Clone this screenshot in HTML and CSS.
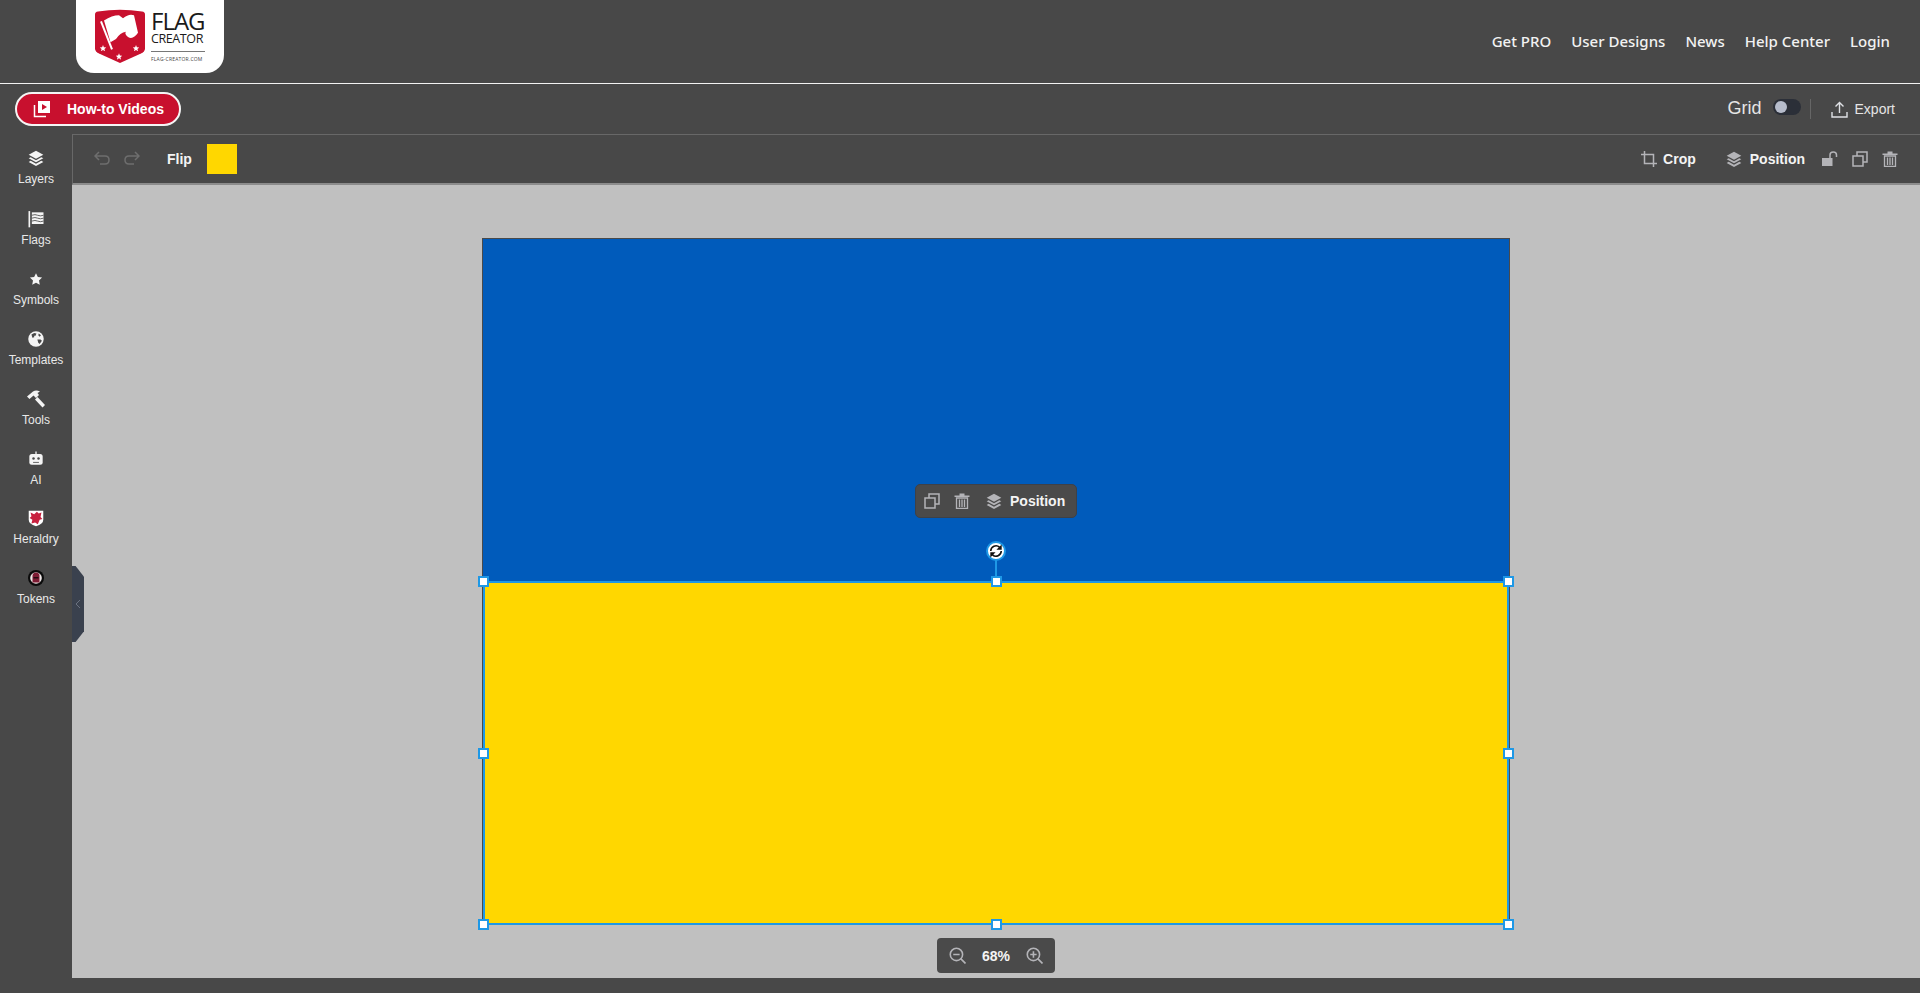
FILE: index.html
```html
<!DOCTYPE html>
<html lang="en">
<head>
    <meta charset="UTF-8">
    <title>Flag Creator</title>
    <link rel="stylesheet" href="styles.css">
</head>
<body>

    <svg class="defs" width="0" height="0">
        <symbol id="i-layers" viewBox="0 0 24 24">
            <path d="M12 1 L23 7 L12 13 L1 7 Z" fill="currentColor"/>
            <path d="M4 10.8 L12 15.2 L20 10.8 L23 12.5 L12 18.5 L1 12.5 Z" fill="currentColor"/>
            <path d="M4 16.3 L12 20.7 L20 16.3 L23 18 L12 24 L1 18 Z" fill="currentColor"/>
        </symbol>
        <symbol id="i-copy" viewBox="0 0 16 16">
            <path d="M1 5h10v10H1z M5 5V1h10v10h-4" fill="none" stroke="currentColor" stroke-width="1.5"/>
        </symbol>
        <symbol id="i-trash" viewBox="0 0 16 16">
            <path d="M0.5 2.5h15v1.6H0.5z M5.5 0.5h5v2h-5z" fill="currentColor"/>
            <path d="M2.5 5h11v10.5h-11z M5.5 6.5v7.5 M8 6.5v7.5 M10.5 6.5v7.5" fill="none" stroke="currentColor" stroke-width="1.3"/>
        </symbol>
        <symbol id="i-star" viewBox="-4 -4 8 8">
            <path d="M0 -3.4 L0.9 -1.1 3.3 -1 1.4 .5 2.1 2.8 0 1.500 -2.100 2.800 -1.400 .5 -3.300 -1 -.9 -1.100Z" fill="#fff"/>
        </symbol>
    </svg>

    <!-- Header -->
    <header class="site-header">
        <a class="logo">
            <svg class="logo-shield" viewBox="0 0 50 53" preserveAspectRatio="none">
                <path d="M0 5 Q0 3 3 2.500 Q25 -1 47 2.500 Q50 3 50 5 V38 Q50 41 46 43 L25 52 L4 43 Q0 41 0 38 Z" fill="#c8102e"/>
                <path d="M9 11 Q17 6 24 6 L28 9 Q34 4 39 6 L43 23 Q38 30 33 27 Q29 24 31 22 Q25 23 21 29 L15.500 32 Z" fill="#fff"/>
                <path d="M6 12 L17 39" stroke="#fff" stroke-width="2"/>
                <use href="#i-star" x="4" y="34" width="8" height="8"/>
                <use href="#i-star" x="20" y="42" width="8" height="8"/>
                <use href="#i-star" x="37" y="34" width="8" height="8"/>
            </svg>
            <div class="logo-text">
                <span class="logo-flag">FLAG</span>
                <span class="logo-creator">CREATOR</span>
                <span class="logo-url">FLAG-CREATOR.COM</span>
            </div>
        </a>
        <nav class="site-nav">
            <a>Get PRO</a>
            <a>User Designs</a>
            <a>News</a>
            <a>Help Center</a>
            <a>Login</a>
        </nav>
    </header>

    <!-- Top bar -->
    <div class="top-bar">
        <button class="howto-btn">
            <svg width="18" height="18" viewBox="0 0 18 18">
                <path d="M5 1h12v12H5z" fill="#fff" />
                <path d="M9 4l5 3-5 3z" fill="#c8102e"/>
                <path d="M1.5 5v11.5H13" fill="none" stroke="#fff" stroke-width="1.5"/>
            </svg>
            <span>How-to Videos</span>
        </button>
        <div class="top-actions">
            <span class="grid-label">Grid</span>
            <span class="toggle"><span class="toggle-knob"></span></span>
            <span class="divider"></span>
            <button class="export-btn">
                <svg width="17" height="17" viewBox="0 0 17 17">
                    <path d="M8.5 12V1.5 M4.5 5.5l4-4 4 4 M1 11v5h15v-5" fill="none" stroke="#dfe1e5" stroke-width="1.4"/>
                </svg>
                <span>Export</span>
            </button>
        </div>
    </div>

    <div class="workspace">
        <!-- Sidebar -->
        <aside class="sidebar">
            <div class="side-item">
                <svg class="side-icon" viewBox="-3 -3 30 30"><use href="#i-layers" width="24" height="24"/></svg>
                <span>Layers</span>
            </div>
            <div class="side-item">
                <svg class="side-icon" viewBox="-2 -2 24 24">
                    <path d="M1 0.5h2V20H1z" fill="currentColor"/>
                    <path d="M5 2h14v14H5z" fill="currentColor"/>
                    <path d="M5 5.5Q9 4 12 5.5T19 5.5 M5 9Q9 7.500 12 9T19 9 M5 12.500Q9 11 12 12.500T19 12.500" stroke="#484848" stroke-width="1" fill="none"/>
                </svg>
                <span>Flags</span>
            </div>
            <div class="side-item">
                <svg class="side-icon" viewBox="-3 -3 26 26">
                    <path d="M10 2.500l2.400 5 5.500.7-4 3.800 1 5.500-4.900-2.700-4.900 2.700 1-5.500-4-3.800 5.500-.7z" fill="currentColor"/>
                </svg>
                <span>Symbols</span>
            </div>
            <div class="side-item">
                <svg class="side-icon" viewBox="-1 -1 22 22">
                    <circle cx="10" cy="10" r="8.500" fill="currentColor"/>
                    <path d="M5 5l3-1.500 2.500.5-1 2.500-1.500 0 0 1.500-2 .5zM11.500 10.500l3.500 0 1.500 1.500-2.500 3.500-1.500-1.500zM13 4l2.500 2-1.500 1.500-1.500-1.500z" fill="#484848"/>
                </svg>
                <span>Templates</span>
            </div>
            <div class="side-item">
                <svg class="side-icon" viewBox="0 0 20 20">
                    <path d="M1 7.500L7 2.500Q10 .5 14 2.500L11.500 4 13 6 10 9 7.500 6.500 3.500 10z M9 10.500l2.500-2.500 7.500 8-2.500 2.500z" fill="currentColor"/>
                </svg>
                <span>Tools</span>
            </div>
            <div class="side-item ai">
                <svg class="side-icon" viewBox="-2 -2 24 24">
                    <path d="M9.200 1h1.600v3.500H9.200z" fill="currentColor"/>
                    <rect x="2" y="4" width="16" height="13" rx="3" fill="currentColor"/>
                    <circle cx="7" cy="9.500" r="1.500" fill="#484848"/>
                    <circle cx="13" cy="9.500" r="1.500" fill="#484848"/>
                    <path d="M6.500 13.500h7v1h-7z" fill="#484848"/>
                </svg>
                <span>AI</span>
            </div>
            <div class="side-item">
                <svg class="side-icon" viewBox="-1 -1 22 22">
                    <path d="M2 2h16v10q0 5-8 7q-8-2-8-7z" fill="#fff"/>
                    <path d="M4 4l4 2 3-3 2 2 3-1-1 5 2 2-3 1-2 5-3-2-4 1 1-4-3-2 2-2z" fill="#c8213f"/>
                </svg>
                <span>Heraldry</span>
            </div>
            <div class="side-item">
                <svg class="side-icon" viewBox="0 0 20 20">
                    <circle cx="10" cy="10" r="8" fill="#0a0a0a"/>
                    <circle cx="10" cy="10" r="5.800" fill="#f0e8e8"/>
                    <path d="M6.500 14.500V8q0-3.500 3.500-3.500t3.500 3.500v6.500z" fill="#7d1c34"/>
                    <path d="M7.500 9h5v1.500h-5z" fill="#240a10"/>
                </svg>
                <span>Tokens</span>
            </div>
            <div class="side-collapse">
                <svg width="6" height="10" viewBox="0 0 6 10">
                    <path d="M5 1L1 5l4 4" fill="none" stroke="#6b7280" stroke-width="1"/>
                </svg>
            </div>
        </aside>

        <main class="main-col">
            <!-- Object toolbar -->
            <div class="toolbar">
                <div class="toolbar-left">
                    <svg class="tool-icon dim" viewBox="0 0 16 16">
                        <path d="M5 1L1 5l4 4 M1 5h10q4 0 4 4t-4 4H6" fill="none" stroke="currentColor" stroke-width="1.500"/>
                    </svg>
                    <svg class="tool-icon dim" viewBox="0 0 16 16">
                        <path d="M11 1l4 4-4 4 M15 5H5q-4 0-4 4t4 4h5" fill="none" stroke="currentColor" stroke-width="1.500"/>
                    </svg>
                    <span class="tool-text flip">Flip</span>
                    <span class="swatch"></span>
                </div>
                <div class="toolbar-right">
                    <div class="tool-group crop">
                        <svg class="tool-icon" viewBox="0 0 16 16">
                            <path d="M3.500 0v12.500H16 M0 3.500h12.500V16" fill="none" stroke="currentColor" stroke-width="1.500"/>
                        </svg>
                        <span class="tool-text">Crop</span>
                    </div>
                    <div class="tool-group position">
                        <svg class="tool-icon layer-icon" viewBox="0 0 24 24"><use href="#i-layers" width="24" height="24"/></svg>
                        <span class="tool-text">Position</span>
                    </div>
                    <svg class="tool-icon lock" viewBox="0 0 16 16">
                        <path d="M0 7h10.500v8H0z" fill="currentColor"/>
                        <path d="M8 7V4q0-3 3.250-3t3.250 3v2" fill="none" stroke="currentColor" stroke-width="1.500"/>
                    </svg>
                    <svg class="tool-icon" viewBox="0 0 16 16"><use href="#i-copy" width="16" height="16"/></svg>
                    <svg class="tool-icon" viewBox="0 0 16 16"><use href="#i-trash" width="16" height="16"/></svg>
                </div>
            </div>

            <!-- Canvas -->
            <div class="canvas">
                <div class="flag">
                    <div class="flag-blue"></div>
                    <div class="flag-yellow"></div>
                </div>

                <div class="selection">
                    <span class="handle h-tl"></span>
                    <span class="handle h-tc"></span>
                    <span class="handle h-tr"></span>
                    <span class="handle h-ml"></span>
                    <span class="handle h-mr"></span>
                    <span class="handle h-bl"></span>
                    <span class="handle h-bc"></span>
                    <span class="handle h-br"></span>
                    <span class="rotate-line"></span>
                    <span class="rotate-handle">
                        <svg width="14" height="14" viewBox="0 0 16 16">
                            <path d="M2 8a6 6 0 0 1 10-4.400 M14 8a6 6 0 0 1-10 4.400" fill="none" stroke="#111" stroke-width="1.800"/>
                            <path d="M14.500 0.500v6h-6z M1.500 15.500v-6h6z" fill="#111"/>
                        </svg>
                    </span>
                </div>

                <div class="context-menu">
                    <svg class="tool-icon" viewBox="0 0 16 16"><use href="#i-copy" width="16" height="16"/></svg>
                    <svg class="tool-icon" viewBox="0 0 16 16"><use href="#i-trash" width="16" height="16"/></svg>
                    <div class="tool-group">
                        <svg class="tool-icon layer-icon" viewBox="0 0 24 24"><use href="#i-layers" width="24" height="24"/></svg>
                        <span class="tool-text">Position</span>
                    </div>
                </div>

                <div class="zoom-box">
                    <svg class="zoom-icon" viewBox="0 0 16 16">
                        <circle cx="7" cy="7" r="5.800" fill="none" stroke="currentColor" stroke-width="1.500"/>
                        <path d="M4 7h6 M11 11l4.500 4.500" fill="none" stroke="currentColor" stroke-width="1.500"/>
                    </svg>
                    <span class="zoom-value">68%</span>
                    <svg class="zoom-icon" viewBox="0 0 16 16">
                        <circle cx="7" cy="7" r="5.800" fill="none" stroke="currentColor" stroke-width="1.500"/>
                        <path d="M4 7h6 M7 4v6 M11 11l4.500 4.500" fill="none" stroke="currentColor" stroke-width="1.500"/>
                    </svg>
                </div>
            </div>

            <div class="bottom-strip"></div>
        </main>
    </div>

</body>
</html>
```

FILE: styles.css
```css
/* Basic Styles */
html, body {
    margin: 0;
    height: 100%;
    overflow: hidden;
}

body {
    display: flex;
    flex-direction: column;
    background-color: #484848;
    font-family: "Liberation Sans", Arial, sans-serif;
    color: #fff;
}

button {
    font-family: inherit;
    cursor: pointer;
}

.defs {
    position: absolute;
}

/* Header */
.site-header {
    height: 83px;
    flex: none;
    display: flex;
    justify-content: space-between;
    border-bottom: 1px solid #f2f2f2;
}

.logo {
    width: 148px;
    height: 73px;
    margin-left: 76px;
    padding: 10px 0 0 19px;
    box-sizing: border-box;
    display: flex;
    gap: 6px;
    background-color: #fff;
    border-radius: 0 0 18px 18px;
}

.logo-shield {
    width: 50px;
    height: 55px;
    margin-top: -1px;
}

.logo-text {
    display: flex;
    flex-direction: column;
    color: #1a1a1a;
    width: 54px;
}

.logo-flag {
    font-family: "Open Sans", sans-serif;
    font-size: 24px;
    line-height: 22px;
    letter-spacing: -1px;
}

.logo-creator {
    font-family: "Open Sans", sans-serif;
    font-size: 12.500px;
    line-height: 12px;
    letter-spacing: -0.4px;
    margin-top: 1px;
    padding-bottom: 6px;
    border-bottom: 1px solid #777;
}

.logo-url {
    font-family: "Open Sans", sans-serif;
    font-size: 5px;
    line-height: 6px;
    letter-spacing: 0.2px;
    margin-top: 4px;
    color: #444;
    white-space: nowrap;
}

.site-nav {
    display: flex;
    align-items: center;
    gap: 20px;
    padding: 0 30px 1px 0;
    height: 82px;
}

.site-nav a {
    font-family: "Noto Sans", sans-serif;
    font-size: 15px;
    font-weight: 500;
    color: #f2f2f2;
}

/* Top bar */
.top-bar {
    height: 50px;
    flex: none;
    display: flex;
    align-items: center;
    justify-content: space-between;
    padding: 0 25px 0 15px;
}

.howto-btn {
    width: 166px;
    height: 34px;
    padding: 0 0 0 16px;
    display: flex;
    align-items: center;
    gap: 16px;
    color: #fff;
    font-size: 14px;
    font-weight: bold;
    background-color: #c8102e;
    border: 2px solid #f5f5f5;
    border-radius: 17px;
}

.top-actions {
    display: flex;
    align-items: center;
}

.grid-label {
    font-size: 18px;
    color: #e5e5e5;
    margin-bottom: 2px;
}

.toggle {
    width: 28px;
    height: 16px;
    margin: 0 0 4px 11px;
    background-color: #2b2f38;
    border-radius: 8px;
    display: flex;
    align-items: center;
    padding-left: 2px;
    box-sizing: border-box;
}

.toggle-knob {
    width: 12px;
    height: 12px;
    border-radius: 50%;
    background-color: #b6bccb;
}

.divider {
    width: 1px;
    height: 20px;
    margin: 0 20px 0 9px;
    background-color: #666;
}

.export-btn {
    display: flex;
    align-items: center;
    gap: 7px;
    padding: 0;
    color: #e5e5e5;
    font-size: 14px;
    background: none;
    border: none;
}

/* Workspace */
.workspace {
    flex: 1;
    display: flex;
    min-height: 0;
}

.sidebar {
    position: relative;
    width: 72px;
    flex: none;
    padding-top: 14px;
    box-sizing: border-box;
}

.side-item {
    height: 60px;
    box-sizing: border-box;
    display: flex;
    flex-direction: column;
    align-items: center;
    gap: 4px;
    font-size: 12px;
    color: #e8e8e8;
}

.side-item:first-child {
    height: 61px;
}

.side-item.ai {
    height: 59px;
}

.side-icon {
    width: 20px;
    height: 20px;
    color: #f4f4f4;
}

.side-collapse {
    position: absolute;
    left: 72px;
    top: 432px;
    width: 12px;
    height: 76px;
    display: flex;
    align-items: center;
    justify-content: center;
    background-color: #3a414e;
    border-radius: 0 8px 8px 0;
    clip-path: polygon(0 0, 30% 0, 100% 14%, 100% 86%, 30% 100%, 0 100%);
    z-index: 5;
}

.main-col {
    flex: 1;
    min-width: 0;
    display: flex;
    flex-direction: column;
}

/* Object toolbar */
.toolbar {
    height: 51px;
    flex: none;
    box-sizing: border-box;
    display: flex;
    align-items: center;
    justify-content: space-between;
    padding: 0 22px 0 21px;
    border-top: 1px solid #686868;
    border-left: 1px solid #686868;
    border-bottom: 2px solid #8c8c8c;
}

.toolbar-left,
.toolbar-right,
.tool-group {
    display: flex;
    align-items: center;
}

.toolbar-left {
    gap: 14px;
}

.toolbar-right {
    gap: 14px;
}

.tool-group {
    gap: 8px;
}

.crop {
    gap: 6px;
    margin-right: 16px;
}

.position {
    margin-right: 3px;
}

.tool-icon {
    width: 16px;
    height: 16px;
    color: #b4b4b8;
}

.tool-icon.dim {
    color: #6e6e6e;
}

.tool-text {
    font-size: 14px;
    font-weight: bold;
    color: #f4f4f4;
}

.flip {
    margin-left: 13px;
}

.swatch {
    width: 30px;
    height: 30px;
    margin-left: 1px;
    background-color: #ffd700;
}

/* Canvas */
.canvas {
    position: relative;
    flex: 1;
    background-color: #c0c0c0;
    overflow: hidden;
}

.bottom-strip {
    height: 15px;
    flex: none;
}

.flag {
    position: absolute;
    left: 410px;
    top: 53px;
    width: 1028px;
    height: 686px;
    box-sizing: border-box;
    border: 1px solid #4a4a4a;
    display: flex;
    flex-direction: column;
}

.flag-blue {
    flex: 1;
    background-color: #005bbb;
}

.flag-yellow {
    flex: 1;
    background-color: #ffd700;
}

.selection {
    position: absolute;
    left: 411px;
    top: 396px;
    width: 1026px;
    height: 344px;
    box-sizing: border-box;
    border: 2px solid #1e98e6;
}

.handle {
    position: absolute;
    width: 7px;
    height: 7px;
    background-color: #fff;
    border: 2px solid #1e98e6;
}

.h-tl, .h-ml, .h-bl { left: -7px; }
.h-tc, .h-bc { left: calc(50% - 5.500px); }
.h-tr, .h-mr, .h-br { right: -7px; }
.h-tl, .h-tc, .h-tr { top: -7px; }
.h-ml, .h-mr { top: calc(50% - 5.500px); }
.h-bl, .h-bc, .h-br { bottom: -7px; }

.rotate-line {
    position: absolute;
    left: calc(50% - 1px);
    top: -25px;
    width: 2px;
    height: 18px;
    background-color: #1e98e6;
}

.rotate-handle {
    position: absolute;
    left: calc(50% - 10px);
    top: -42px;
    width: 16px;
    height: 16px;
    display: flex;
    align-items: center;
    justify-content: center;
    background-color: #fff;
    border: 2px solid #1e98e6;
    border-radius: 50%;
}

.context-menu {
    position: absolute;
    left: 843px;
    top: 299px;
    width: 162px;
    height: 34px;
    box-sizing: border-box;
    padding-left: 8px;
    display: flex;
    align-items: center;
    gap: 14px;
    background-color: #4a4a4a;
    border: 1px solid #3d4148;
    border-radius: 5px;
}

.context-menu .tool-group {
    margin-left: 2px;
}

.zoom-box {
    position: absolute;
    left: 865px;
    top: 753px;
    width: 118px;
    height: 35px;
    display: flex;
    align-items: center;
    justify-content: center;
    gap: 14px;
    background-color: #4a4a4a;
    border-radius: 4px;
}

.zoom-icon {
    width: 17px;
    height: 17px;
    color: #b4b4b8;
}

.zoom-value {
    font-size: 14px;
    font-weight: bold;
    width: 32px;
    text-align: center;
    color: #f4f4f4;
}
```
